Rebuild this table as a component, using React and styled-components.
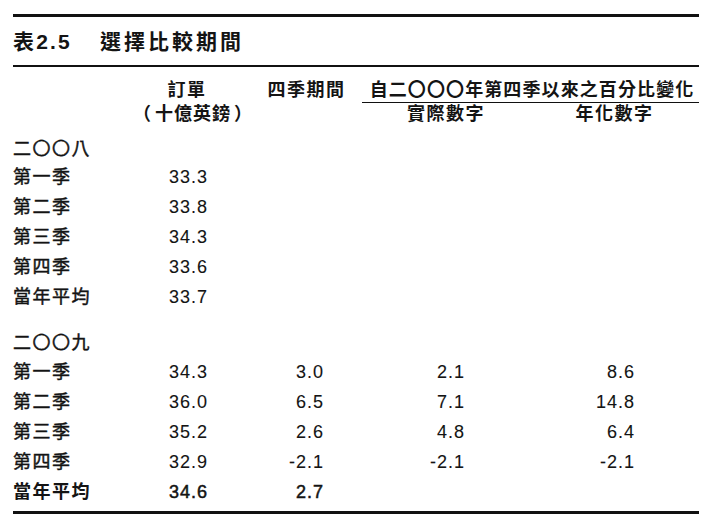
import React from "react";
import styled, { createGlobalStyle } from "styled-components";

const Global = createGlobalStyle`
  html, body { margin: 0; padding: 0; background: #fff; }
  body {
    font-family: "Liberation Sans", "Noto Sans CJK TC", sans-serif;
    color: #141414;
  }
`;

const Page = styled.div`
  width: 725px;
  height: 532px;
  box-sizing: border-box;
  padding: 14px 0 0 13px;
`;

const Sheet = styled.div`
  width: 686px;
`;

const Rule = styled.div`
  height: ${(p) => p.$h}px;
  background: #111;
  margin-top: ${(p) => p.$mt || 0}px;
`;

const Title = styled.h1`
  margin: 0;
  height: 48px;
  line-height: 50px;
  font-size: 21px;
  font-weight: 700;
  display: flex;
  white-space: nowrap;
`;

const TitleNo = styled.span`
  letter-spacing: 2.2px;
  width: 87px;
`;

const TitleText = styled.span`
  letter-spacing: 3px;
`;

const Row = styled.div`
  display: grid;
  grid-template-columns: 117px 125px 107px 168px 169px;
  height: ${(p) => p.$h}px;
  box-sizing: border-box;
  padding-top: ${(p) => p.$pt || 0}px;
  line-height: ${(p) => p.$lh}px;
`;

const Label = styled.div`
  font-size: 18px;
  letter-spacing: 1.5px;
  font-weight: ${(p) => (p.$bold ? 700 : 400)};
  -webkit-text-stroke: ${(p) => (p.$bold ? 0 : 0.45)}px #141414;
  white-space: nowrap;
`;

const Head = styled.div`
  font-size: 18px;
  font-weight: 700;
  text-align: center;
  letter-spacing: ${(p) => (p.$ls != null ? p.$ls : 1.5)}px;
  padding-right: ${(p) => p.$pr || 0}px;
  white-space: nowrap;
  grid-column: ${(p) => p.$col || "auto"};
`;

const Group = styled(Head)`
  display: flex;
  justify-content: center;
  border-bottom: 1.5px solid #111;
  letter-spacing: 1.1px;
  padding-left: 3px;
`;

const Paren = styled.span`
  display: inline-block;
  margin: 0 ${(p) => p.$m}px;
`;

const Num = styled.div`
  font-size: 18px;
  letter-spacing: 1px;
  text-align: right;
  padding-right: ${(p) => p.$pr}px;
  font-weight: 400;
  -webkit-text-stroke: ${(p) => (p.$bold ? 0.5 : 0.1)}px #141414;
`;

const PR = [47, 38, 65, 64];

const y2008 = [
  ["第一季", "33.3"],
  ["第二季", "33.8"],
  ["第三季", "34.3"],
  ["第四季", "33.6"],
  ["當年平均", "33.7"],
];

const y2009 = [
  ["第一季", "34.3", "3.0", "2.1", "8.6"],
  ["第二季", "36.0", "6.5", "7.1", "14.8"],
  ["第三季", "35.2", "2.6", "4.8", "6.4"],
  ["第四季", "32.9", "-2.1", "-2.1", "-2.1"],
  ["當年平均", "34.6", "2.7", "", "", true],
];

function DataRow({ cells, bold }) {
  const [label, ...nums] = cells;
  return (
    <Row $h={30} $lh={30}>
      <Label $bold={bold}>{label}</Label>
      {[0, 1, 2, 3].map((i) => (
        <Num key={i} $pr={PR[i]} $bold={bold}>
          {nums[i] || ""}
        </Num>
      ))}
    </Row>
  );
}

export default function App() {
  return (
    <>
      <Global />
      <Page>
        <Sheet>
          <Rule $h={2.5} />
          <Title>
            <TitleNo>表2.5</TitleNo>
            <TitleText>選擇比較期間</TitleText>
          </Title>
          <Rule $h={2} />
          <Row $h={36} $pt={12} $lh={22}>
            <div />
            <Head $pr={11}>訂單</Head>
            <Head $pr={4}>四季期間</Head>
            <Group $col="4 / 6">
              <span>自二〇〇〇年第四季以來之百分比變化</span>
            </Group>
          </Row>
          <Row $h={20} $lh={22}>
            <div />
            <Head $ls={1}>
              <Paren $m={3}>（</Paren>十億英鎊<Paren $m={3}>）</Paren>
            </Head>
            <div />
            <Head>實際數字</Head>
            <Head>年化數字</Head>
          </Row>
          <Row $h={39} $pt={14} $lh={25}>
            <Label>二〇〇八</Label>
          </Row>
          {y2008.map((r) => (
            <DataRow key={"a" + r[0]} cells={r} />
          ))}
          <Row $h={45} $pt={18} $lh={27}>
            <Label>二〇〇九</Label>
          </Row>
          {y2009.map((r) => (
            <DataRow key={"b" + r[0]} cells={r.slice(0, 5)} bold={r[5]} />
          ))}
          <Rule $h={3} $mt={4} />
        </Sheet>
      </Page>
    </>
  );
}
